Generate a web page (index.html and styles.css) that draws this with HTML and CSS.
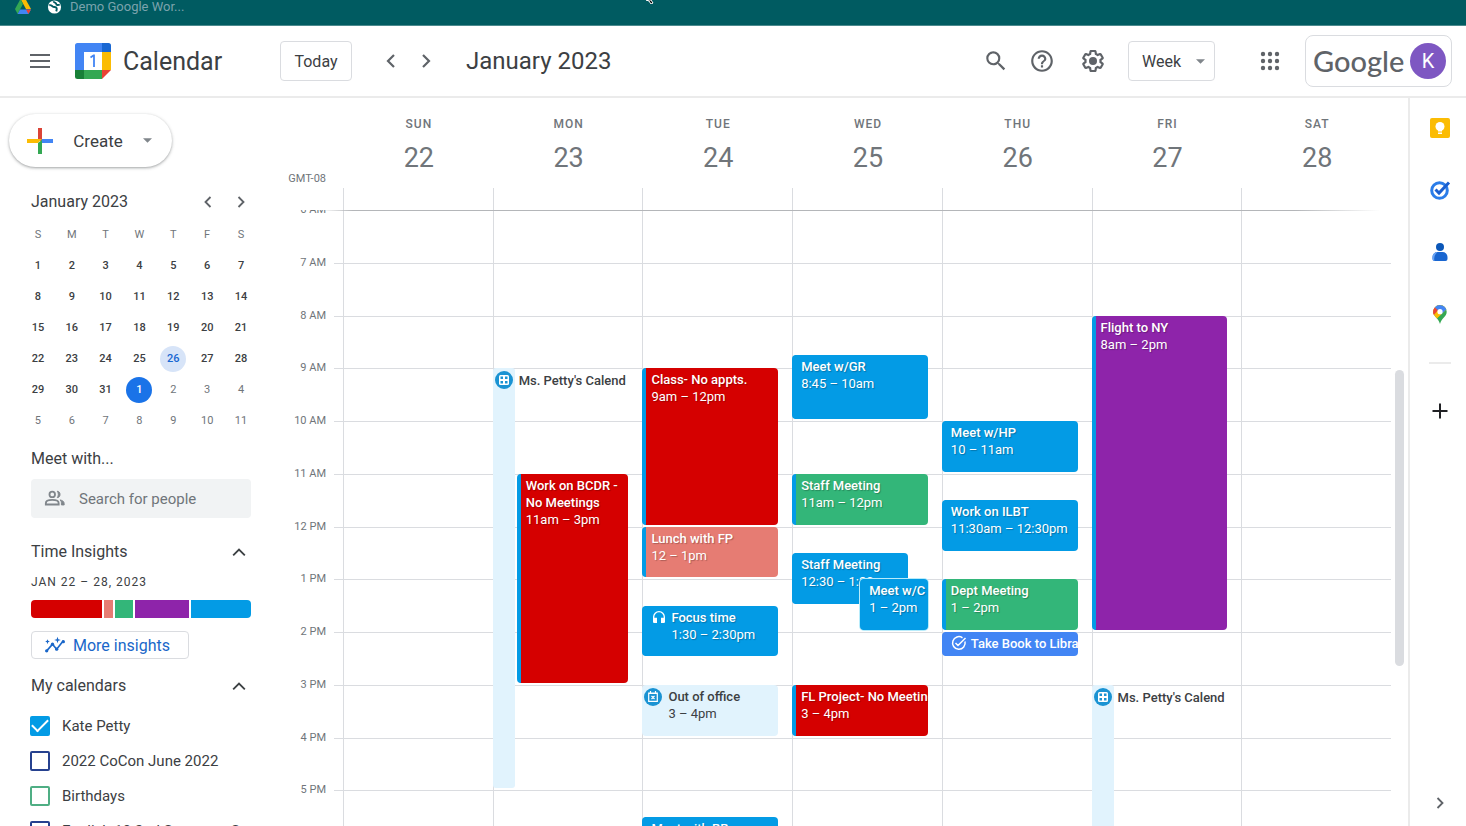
FILE: index.html
```html
<!DOCTYPE html>
<html lang="en">
<head>
<meta charset="utf-8">
<title>Calendar - January 2023</title>
<link rel="stylesheet" href="styles.css">
</head>
<body>
<svg class="defs" aria-hidden="true">
  <symbol id="left" viewBox="0 0 24 24"><path d="M15 6l-6 6 6 6" fill="none" stroke="currentColor" stroke-width="2.2"/></symbol>
  <symbol id="right" viewBox="0 0 24 24"><path d="M9 6l6 6-6 6" fill="none" stroke="currentColor" stroke-width="2.2"/></symbol>
  <symbol id="up" viewBox="0 0 24 24"><path d="M5 16l7-7 7 7" fill="none" stroke="currentColor" stroke-width="2.2"/></symbol>
  <symbol id="slots" viewBox="0 0 18 18"><circle cx="9" cy="9" r="9" fill="#1a93d3"/><rect x="4" y="4" width="10" height="10" rx="1.5" fill="#fff"/><path d="M5.500 5.500h2.500v2.500H5.500zM10 5.500h2.500v2.500H10zM5.500 10h2.500v2.500H5.500zM10 10h2.500v2.500H10z" fill="#1a93d3"/></symbol>
</svg>

<div class="bookmarks">
  <svg class="bm-drive" viewBox="0 0 16 15"><path d="M5.500-1h5L16 9h-5z" fill="#fbbc04"/><path d="M5.500-1L0 9l2.600 5L8 4z" fill="#34a853"/><path d="M2.600 14L5 9.500h11L13.400 14z" fill="#4285f4"/><path d="M11 9.500h5L13.400 14z" fill="#ea4335"/></svg>
  <svg class="bm-globe" viewBox="0 0 16 16"><circle cx="8" cy="8" r="7.500" fill="#fff"/><path d="M2 6c3-1 3 2 6 2s3 2 2 5M7 1.500c0 2 3 1 3 3s3 1 4 1" fill="none" stroke="#005b61" stroke-width="2.200"/></svg>
  <span>Demo Google Wor...</span>
  <svg class="pointer" viewBox="0 0 10 4"><path d="M1 0h5l2 3-2 1-2-3z" fill="#000" stroke="#fff"/></svg>
</div>

<header class="topbar">
  <button class="icon-btn" aria-label="Main menu"><svg class="i20" viewBox="0 0 20 14"><path d="M0 1h20M0 7h20M0 13h20" stroke="currentColor" stroke-width="2"/></svg></button>
  <div class="brand">
    <svg class="logo" viewBox="0 0 36 36"><path d="M2.500 0H27v9H9v18H0V2.500A2.500 2.500 0 0 1 2.500 0z" fill="#4285f4"/><path d="M27 0h6.500A2.500 2.500 0 0 1 36 2.500V9h-9z" fill="#1967d2"/><path d="M27 9h9v18h-9z" fill="#fbbc04"/><path d="M9 27h18v9H9z" fill="#34a853"/><path d="M0 27h9v9H2.500A2.500 2.500 0 0 1 0 33.500z" fill="#188038"/><path d="M27 27h9l-9 9z" fill="#ea4335"/><path d="M9 9h18v18H9z" fill="#fff"/><path d="M15.500 14.500l3-2h.5V24" fill="none" stroke="#4285f4" stroke-width="1.800"/></svg>
    <span class="brand-name">Calendar</span>
  </div>
  <button class="box-btn today">Today</button>
  <div class="pager">
    <button class="icon-btn" aria-label="Previous week"><svg class="i24"><use href="#left"/></svg></button>
    <button class="icon-btn" aria-label="Next week"><svg class="i24"><use href="#right"/></svg></button>
  </div>
  <h1 class="period">January 2023</h1>
  <div class="tools">
    <button class="icon-btn" aria-label="Search"><svg class="i26" viewBox="0 0 24 24"><path fill="currentColor" d="M15.500 14h-.79l-.28-.27A6.471 6.471 0 0 0 16 9.500 6.500 6.500 0 1 0 9.500 16c1.610 0 3.090-.590 4.230-1.570l.27.28v.79l5 4.990L20.490 19l-4.990-5zm-6 0C7.010 14 5 11.990 5 9.500S7.010 5 9.500 5 14 7.010 14 9.500 11.990 14 9.500 14z"/></svg></button>
    <button class="icon-btn" aria-label="Support"><svg class="i26" viewBox="0 0 24 24"><path fill="currentColor" d="M11 18h2v-2h-2v2zm1-16C6.480 2 2 6.480 2 12s4.480 10 10 10 10-4.480 10-10S17.520 2 12 2zm0 18c-4.410 0-8-3.590-8-8s3.590-8 8-8 8 3.590 8 8-3.590 8-8 8zm0-14c-2.210 0-4 1.790-4 4h2c0-1.100.9-2 2-2s2 .9 2 2c0 2-3 1.750-3 5h2c0-2.250 3-2.500 3-5 0-2.210-1.790-4-4-4z"/></svg></button>
    <button class="icon-btn" aria-label="Settings"><svg class="i26" viewBox="0 0 24 24"><path fill="currentColor" d="M13.850 22.250h-3.700c-.74 0-1.360-.54-1.450-1.270l-.27-1.890c-.27-.14-.53-.29-.79-.46l-1.800.72c-.7.26-1.470-.03-1.810-.65L2.200 15.530c-.35-.66-.2-1.440.36-1.880l1.530-1.190c-.01-.15-.02-.3-.02-.46 0-.15.01-.31.02-.46l-1.520-1.190c-.59-.45-.74-1.260-.37-1.880l1.850-3.190c.34-.62 1.110-.9 1.790-.63l1.810.73c.26-.17.52-.32.78-.46l.27-1.910c.09-.7.71-1.250 1.440-1.250h3.700c.74 0 1.360.54 1.450 1.270l.27 1.890c.27.14.53.29.79.46l1.800-.72c.71-.26 1.480.03 1.820.65l1.840 3.180c.36.66.2 1.440-.36 1.880l-1.520 1.190c.01.15.02.3.02.46s-.01.31-.02.46l1.520 1.190c.56.45.72 1.230.37 1.860l-1.860 3.220c-.34.62-1.110.9-1.800.63l-1.800-.72c-.26.17-.52.32-.78.46l-.27 1.910c-.1.68-.72 1.220-1.460 1.220zm-3.230-2h2.760l.37-2.550.53-.22c.44-.18.88-.44 1.340-.78l.45-.34 2.380.96 1.380-2.400-2.030-1.580.07-.56c.03-.26.06-.51.06-.78s-.03-.53-.06-.78l-.07-.56 2.030-1.580-1.390-2.400-2.390.96-.45-.35c-.42-.32-.87-.58-1.330-.77l-.52-.22-.37-2.550h-2.760l-.37 2.550-.53.21c-.44.19-.88.44-1.340.79l-.45.33-2.380-.95-1.390 2.390 2.030 1.580-.07.56a7 7 0 0 0-.06.79c0 .26.02.53.06.78l.07.56-2.030 1.580 1.380 2.400 2.390-.96.45.35c.43.33.86.58 1.330.77l.53.22.38 2.550z"/><circle cx="12" cy="12" r="3.700" fill="currentColor"/></svg></button>
  </div>
  <div class="view-pick"><select aria-label="View"><option>Week</option></select><svg class="caret" viewBox="0 0 10 5"><path d="M0 0h10L5 5z" fill="#80868b"/></svg></div>
  <button class="icon-btn apps" aria-label="Google apps"><svg class="i20" viewBox="0 0 20 20" fill="currentColor"><circle cx="3" cy="3" r="2.200"/><circle cx="10" cy="3" r="2.200"/><circle cx="17" cy="3" r="2.200"/><circle cx="3" cy="10" r="2.200"/><circle cx="10" cy="10" r="2.200"/><circle cx="17" cy="10" r="2.200"/><circle cx="3" cy="17" r="2.200"/><circle cx="10" cy="17" r="2.200"/><circle cx="17" cy="17" r="2.200"/></svg></button>
  <a class="account" href="#"><span class="wordmark">Google</span><span class="avatar">K</span></a>
</header>

<div class="main">
  <aside class="sidebar">
    <button class="create"><svg class="plus" viewBox="0 0 26 26"><path d="M11 0h4v13h-4z" fill="#db4437"/><path d="M0 11h11l4 0-4 4H0z" fill="#fbbc04"/><path d="M15 11h11v4H13z" fill="#4285f4"/><path d="M11 15l4-3v14h-4z" fill="#34a853"/></svg><span>Create</span><svg class="caret" viewBox="0 0 10 5"><path d="M0 0h10L5 5z" fill="#80868b"/></svg></button>

    <div class="mini-head"><h2>January 2023</h2>
      <button class="icon-btn" aria-label="Previous month"><svg class="i20"><use href="#left"/></svg></button>
      <button class="icon-btn" aria-label="Next month"><svg class="i20"><use href="#right"/></svg></button></div>
    <table class="mini">
      <thead><tr><th>S</th><th>M</th><th>T</th><th>W</th><th>T</th><th>F</th><th>S</th></tr></thead>
      <tbody>
      <tr><td>1</td><td>2</td><td>3</td><td>4</td><td>5</td><td>6</td><td>7</td></tr>
      <tr><td>8</td><td>9</td><td>10</td><td>11</td><td>12</td><td>13</td><td>14</td></tr>
      <tr><td>15</td><td>16</td><td>17</td><td>18</td><td>19</td><td>20</td><td>21</td></tr>
      <tr><td>22</td><td>23</td><td>24</td><td>25</td><td><span class="dot selected">26</span></td><td>27</td><td>28</td></tr>
      <tr><td>29</td><td>30</td><td>31</td><td><span class="dot current">1</span></td><td class="out">2</td><td class="out">3</td><td class="out">4</td></tr>
      <tr class="out"><td>5</td><td>6</td><td>7</td><td>8</td><td>9</td><td>10</td><td>11</td></tr>
      </tbody>
    </table>

    <h2 class="meet"><label for="people">Meet with...</label></h2>
    <div class="people"><svg class="i22" viewBox="0 0 24 24" fill="none" stroke="#80868b" stroke-width="2"><circle cx="9" cy="7" r="3"/><path d="M2 18v-1.500C2 14 6 13 9 13s7 1 7 3.500V18z"/><path d="M14.500 3.500c4 0 4 7 0 7 1.500-2 1.500-5 0-7z" fill="#80868b" stroke-width="1"/><path d="M17.500 13c2.500.5 4.500 1.500 4.500 4v1.500h-3V16c0-1.500-.5-2-1.500-3z" fill="#80868b" stroke-width="1"/></svg><input id="people" type="text" placeholder="Search for people"></div>

    <div class="section-head insights-head"><h2>Time Insights</h2><button class="icon-btn" aria-label="Collapse time insights"><svg class="i20"><use href="#up"/></svg></button></div>
    <p class="range">JAN 22 – 28, 2023</p>
    <div class="bar"><i class="red" style="flex-grow:71"></i><i class="salmon" style="flex-grow:9"></i><i class="green" style="flex-grow:18"></i><i class="purple" style="flex-grow:53"></i><i class="blue" style="flex-grow:60"></i></div>
    <button class="more"><svg class="i20" viewBox="0 0 24 20" fill="none" stroke="#1a67c9" stroke-width="2"><path d="M2 17l7-8 5 6 8-10"/><g fill="#1a67c9" stroke="none"><circle cx="2" cy="17" r="2"/><circle cx="9" cy="9" r="2"/><circle cx="14" cy="15" r="2"/><circle cx="22" cy="6" r="2"/><path d="M15 0l1 3 3 1-3 1-1 3-1-3-3-1 3-1zM3 3l.8 2 2 .8-2 .8L3 9l-.8-2.400-2-.8 2-.8z"/></g></svg>More insights</button>

    <div class="section-head cal-head"><h2>My calendars</h2><button class="icon-btn" aria-label="Collapse my calendars"><svg class="i20"><use href="#up"/></svg></button></div>
    <ul class="cals">
      <li><label><input type="checkbox" class="c-blue" checked>Kate Petty</label></li>
      <li><label><input type="checkbox" class="c-navy">2022 CoCon June 2022</label></li>
      <li><label><input type="checkbox" class="c-green">Birthdays</label></li>
      <li><label><input type="checkbox" class="c-navy">English 10 2nd Semester S...</label></li>
    </ul>
  </aside>

  <main class="week">
    <div class="days-head">
      <div class="zone">GMT-08</div>
      <div class="day-name"><span>SUN</span><b>22</b></div>
      <div class="day-name"><span>MON</span><b>23</b></div>
      <div class="day-name"><span>TUE</span><b>24</b></div>
      <div class="day-name"><span>WED</span><b>25</b></div>
      <div class="day-name"><span>THU</span><b>26</b></div>
      <div class="day-name"><span>FRI</span><b>27</b></div>
      <div class="day-name"><span>SAT</span><b>28</b></div>
    </div>
    <div class="scroll">
      <div class="edge"></div>
      <div class="board">
        <div class="hours"><span>6 AM</span><span>7 AM</span><span>8 AM</span><span>9 AM</span><span>10 AM</span><span>11 AM</span><span>12 PM</span><span>1 PM</span><span>2 PM</span><span>3 PM</span><span>4 PM</span><span>5 PM</span></div>
        <div class="lines"><i></i><i></i><i></i><i></i><i></i><i></i><i></i><i></i><i></i><i></i><i></i><i></i></div>
        <div class="days">
          <div class="day"></div>
          <div class="day">
            <div class="slot" style="grid-row:13/45"><div class="strip"><svg class="i18"><use href="#slots"/></svg></div><strong>Ms. Petty's Calend</strong></div>
            <div class="event red inset" style="grid-row:21/37"><strong>Work on BCDR - No Meetings</strong><span>11am – 3pm</span></div>
          </div>
          <div class="day">
            <div class="event red one" style="grid-row:13/25"><strong>Class- No appts.</strong><span>9am – 12pm</span></div>
            <div class="event salmon one" style="grid-row:25/29"><strong>Lunch with FP</strong><span>12 – 1pm</span></div>
            <div class="event blue one with-icon" style="grid-row:31/35"><svg class="i16" viewBox="0 0 24 24"><path fill="#fff" d="M12 3a9 9 0 0 0-9 9v7c0 1.100.9 2 2 2h4v-8H5v-1a7 7 0 0 1 14 0v1h-4v8h4c1.100 0 2-.9 2-2v-7a9 9 0 0 0-9-9z"/></svg><div><strong>Focus time</strong><span>1:30 – 2:30pm</span></div></div>
            <div class="event away one" style="grid-row:37/41"><svg class="i18" viewBox="0 0 18 18"><circle cx="9" cy="9" r="9" fill="#1a93d3"/><path d="M4.700 5h8.600v8.300H4.700zM4.700 5.500h8.600M6.500 3v2M11.500 3v2M7.500 8l3 3M10.500 8l-3 3" fill="none" stroke="#fff" stroke-width="1.200"/></svg><div><strong>Out of office</strong><span>3 – 4pm</span></div></div>
            <div class="event blue one" style="grid-row:47/49"><strong>Meet with RR</strong></div>
          </div>
          <div class="day">
            <div class="event blue one" style="grid-row:12/17"><strong>Meet w/GR</strong><span>8:45 – 10am</span></div>
            <div class="event green one" style="grid-row:21/25"><strong>Staff Meeting</strong><span>11am – 12pm</span></div>
            <div class="event blue one under" style="grid-row:27/31"><strong>Staff Meeting</strong><span>12:30 – 1:30pm</span></div>
            <div class="event blue one over" style="grid-row:29/33"><strong>Meet w/C</strong><span>1 – 2pm</span></div>
            <div class="event red one" style="grid-row:37/41"><strong>FL Project- No Meetings</strong><span>3 – 4pm</span></div>
          </div>
          <div class="day">
            <div class="event blue one" style="grid-row:17/21"><strong>Meet w/HP</strong><span>10 – 11am</span></div>
            <div class="event blue one" style="grid-row:23/27"><strong>Work on ILBT</strong><span>11:30am – 12:30pm</span></div>
            <div class="event green one" style="grid-row:29/33"><strong>Dept Meeting</strong><span>1 – 2pm</span></div>
            <div class="event task one with-icon" style="grid-row:33/35"><svg class="i16" viewBox="0 0 16 16" fill="none" stroke="#fff" stroke-width="1.500"><path d="M14 6.500A6.300 6.300 0 1 1 11.500 2.800M4.500 8l2.500 2.500L14.500 3"/></svg><strong>Take Book to Library</strong></div>
          </div>
          <div class="day">
            <div class="event purple one" style="grid-row:9/33"><strong>Flight to NY</strong><span>8am – 2pm</span></div>
            <div class="slot" style="grid-row:37/49"><div class="strip"><svg class="i18"><use href="#slots"/></svg></div><strong>Ms. Petty's Calend</strong></div>
          </div>
          <div class="day"></div>
        </div>
      </div>
      <div class="track"><div class="thumb"></div></div>
    </div>
  </main>

  <aside class="panel">
    <button class="icon-btn" aria-label="Keep"><svg class="i22" viewBox="0 0 22 22"><rect x="1" y="1" width="20" height="20" rx="2" fill="#fbbc04"/><circle cx="11" cy="9.500" r="4.500" fill="#fff"/><path d="M9 12h4v2.500H9zM9 15.500h4V17H9z" fill="#fff"/></svg></button>
    <button class="icon-btn" aria-label="Tasks"><svg class="i22" viewBox="0 0 22 22" fill="none"><circle cx="10.500" cy="11.500" r="7.800" stroke="#2b7de9" stroke-width="3"/><path d="M6.500 10.500l3.500 3.500L20 3.500" stroke="#1a5fd0" stroke-width="3"/></svg></button>
    <button class="icon-btn" aria-label="Contacts"><svg class="i22" viewBox="0 0 22 22"><circle cx="11" cy="6" r="4" fill="#0b57b8"/><path d="M3.500 16a5 5 0 0 1 5-5h5a5 5 0 0 1 5 5v2a2 2 0 0 1-2 2h-11a2 2 0 0 1-2-2z" fill="#1a66d0"/><path d="M3.500 16a5 5 0 0 1 5-5 9 9 0 0 0-3 9 2 2 0 0 1-2-2z" fill="#6aa4f5"/></svg></button>
    <button class="icon-btn" aria-label="Maps"><svg class="i22" viewBox="0 0 22 22"><path d="M11 2a6.700 6.700 0 0 1 6.700 6.700c0 5-5.200 6.300-6.700 12.300-1.500-6-6.700-7.300-6.700-12.300A6.700 6.700 0 0 1 11 2z" fill="#34a853"/><path d="M5.800 4.500A6.700 6.700 0 0 1 17.300 6.500L8 15.500C6 13.500 4.300 11.500 4.300 8.700c0-1.600.5-3 1.500-4.200z" fill="#fbbc04"/><path d="M5.800 4.500A6.700 6.700 0 0 1 17.300 6.500L12 11.500z" fill="#4285f4"/><path d="M5.800 4.500L9 7.200 4.800 12a7 7 0 0 1 1-7.500z" fill="#ea4335"/><circle cx="11" cy="8.700" r="2.600" fill="#fff"/></svg></button>
    <hr>
    <button class="icon-btn add" aria-label="Get add-ons"><svg class="i22" viewBox="0 0 22 22"><path d="M11 3.500v15M3.500 11h15" stroke="#202124" stroke-width="2"/></svg></button>
    <button class="icon-btn hide" aria-label="Hide side panel"><svg class="i20"><use href="#right"/></svg></button>
  </aside>
</div>
</body>
</html>
```
FILE: styles.css
```css
* { box-sizing: border-box; }
body {
  margin: 0;
  height: 100vh;
  display: flex;
  flex-direction: column;
  overflow: hidden;
  background: #fff;
  color: #3c4043;
  font-family: Roboto, "Liberation Sans", sans-serif;
  font-size: 13px;
}
h1, h2, p, ul { margin: 0; padding: 0; }
ul { list-style: none; }
button, input, select { font: inherit; color: inherit; }
svg { display: block; flex: none; }
.defs { position: absolute; width: 0; height: 0; }
.i16 { width: 16px; height: 16px; }
.i18 { width: 18px; height: 18px; }
.i20 { width: 20px; height: 20px; }
.i22 { width: 22px; height: 22px; }
.i24 { width: 24px; height: 24px; }
.i26 { width: 26px; height: 26px; }
.icon-btn { border: 0; padding: 0; background: none; color: #5f6368; display: flex; }
.caret { width: 9px; height: 5px; }

/* Browser bookmarks strip */
.bookmarks {
  flex: none;
  height: 26px;
  background: #005b61;
  border-bottom: 1px solid #4b8a8e;
  color: #7ba3ad;
  display: flex;
  align-items: flex-start;
  padding-left: 15px;
  line-height: 14px;
  position: relative;
}
.bm-drive { width: 16px; height: 15px; margin-right: 16px; }
.bm-globe { width: 15px; height: 14px; margin-right: 8px; }
.pointer { position: absolute; left: 44%; top: 0; width: 10px; height: 4px; }

/* Top bar */
.topbar {
  flex: none;
  height: 72px;
  border-bottom: 2px solid #ebebeb;
  display: flex;
  align-items: center;
  padding: 0 14px 0 30px;
}
.brand { display: flex; align-items: center; gap: 12px; width: 205px; margin-left: 25px; }
.logo { width: 36px; height: 36px; }
.brand-name { font-size: 25px; }
.box-btn { background: #fff; border: 1px solid #dadce0; border-radius: 4px; }
.today { width: 72px; height: 40px; padding: 0; font-size: 16px; color: #3c4043; }
.pager { display: flex; gap: 11px; margin-left: 27px; }
.period { font-size: 24px; font-weight: 400; margin-left: 28px; }
.tools { display: flex; gap: 25px; margin-left: auto; }
.tools button:first-child { margin-right: -5px; }
.view-pick { display: flex; align-items: center; position: relative; margin-left: 22px; }
.view-pick select {
  appearance: none;
  width: 87px;
  height: 40px;
  padding: 0 0 0 13px;
  background: #fff;
  border: 1px solid #dadce0;
  border-radius: 4px;
  font-size: 16px;
}
.view-pick .caret { position: absolute; right: 10px; pointer-events: none; }
.apps { margin: 0 25px 0 45px; }
.account {
  display: flex;
  align-items: center;
  justify-content: space-between;
  width: 147px;
  height: 52px;
  padding: 0 5px 0 7px;
  border: 1px solid #dadce0;
  border-radius: 8px;
  text-decoration: none;
  color: #5f6368;
}
.wordmark { font-family: Lato, Roboto, sans-serif; font-size: 29px; font-weight: 500; line-height: 36px; }
.avatar {
  width: 36px;
  height: 36px;
  border-radius: 50%;
  background: #7e57c2;
  color: #fff;
  font-size: 20px;
  line-height: 36px;
  text-align: center;
}

.main { flex: 1; min-height: 0; display: flex; }

/* Sidebar */
.sidebar { flex: none; width: 271px; padding: 16px 14px 0 9px; overflow: hidden; }
.sidebar h2 { font-size: 16px; font-weight: 400; line-height: 20px; }
.create {
  display: flex;
  align-items: center;
  width: 163px;
  height: 53px;
  padding: 0 20px 0 18px;
  border: 0;
  border-radius: 27px;
  background: #fff;
  box-shadow: 0 1px 2px rgba(60, 64, 67, .3), 0 1px 3px 1px rgba(60, 64, 67, .15);
  font-size: 17px;
}
.create span { margin: 0 auto; }
.plus { width: 26px; height: 26px; }
.mini-head { display: flex; align-items: center; height: 20px; margin: 25px 6px 7px 22px; gap: 13px; }
.mini-head h2 { margin-right: auto; }
.mini { width: 237px; margin-left: 12px; border-collapse: collapse; table-layout: fixed; font-size: 11px; }
.mini th, .mini td { height: 31px; padding: 0; text-align: center; font-weight: 500; }
.mini th { color: #70757a; font-weight: 400; }
.mini .out, .mini .out td { color: #70757a; font-weight: 400; }
.dot { display: block; width: 26px; height: 26px; margin: 0 auto; border-radius: 50%; line-height: 26px; }
.selected { background: #d7e4f8; color: #1967d2; }
.current { background: #1a73e8; color: #fff; }
.sidebar .meet { margin: 13px 0 10px 22px; }
.people {
  display: flex;
  align-items: center;
  gap: 13px;
  height: 39px;
  margin: 0 6px 0 22px;
  padding-left: 13px;
  background: #f1f3f4;
  border-radius: 4px;
}
.people input { flex: 1; min-width: 0; border: 0; padding: 0; background: none; font-size: 15px; }
.people input::placeholder { color: #70757a; opacity: 1; }
.section-head { display: flex; align-items: center; justify-content: space-between; margin: 0 8px 0 22px; color: #3c4043; }
.section-head .icon-btn { color: #3c4043; }
.insights-head { margin-top: 24px; }
.range { margin: 12px 0 10px 22px; font-size: 12px; line-height: 16px; letter-spacing: 1px; }
.bar { display: flex; gap: 2px; height: 18px; margin: 0 6px 0 22px; border-radius: 4px; overflow: hidden; }
.bar i { flex-basis: 0; }
.more {
  display: flex;
  align-items: center;
  gap: 8px;
  width: 158px;
  height: 28px;
  margin: 13px 0 0 22px;
  padding: 0 0 0 13px;
  border: 1px solid #dadce0;
  border-radius: 4px;
  background: #fff;
  color: #1a67c9;
  font-size: 16px;
}
.cal-head { margin-top: 17px; }
.cals { margin: 12px 0 0 21px; }
.cals label { display: flex; align-items: center; gap: 12px; height: 35px; font-size: 15px; white-space: nowrap; }
.cals input {
  appearance: none;
  flex: none;
  width: 20px;
  height: 20px;
  margin: 0;
  border: 2px solid;
  border-radius: 2px;
  display: grid;
  place-items: center;
}
.cals .c-blue { border-color: #039be5; background: #039be5; }
.cals .c-navy { border-color: #26418f; }
.cals .c-green { border-color: #4fae84; }
.cals input:checked::after {
  content: "";
  width: 14px;
  height: 7px;
  border: solid #fff;
  border-width: 0 0 2px 2px;
  transform: translateY(-2px) rotate(-45deg);
}

/* Event colours */
.red { background: #d50000; }
.salmon { background: #e67c73; }
.green { background: #33b679; }
.purple { background: #8e24aa; }
.blue { background: #039be5; }
.task { background: #4285f4; }

/* Week view */
.week { flex: 1; min-width: 0; display: flex; flex-direction: column; }
.days-head {
  flex: none;
  display: grid;
  grid-template-columns: 72px repeat(7, 1fr);
  height: 112px;
  margin-right: 17px;
  color: #70757a;
}
.zone { padding: 74px 17px 0 0; text-align: right; font-size: 11px; line-height: 14px; }
.day-name {
  display: flex;
  flex-direction: column;
  align-items: center;
  padding: 18px 0 0 2px;
  background: linear-gradient(#dadce0, #dadce0) left bottom / 1px 22px no-repeat;
}
.day-name span { font-size: 12px; font-weight: 500; line-height: 16px; letter-spacing: 1px; }
.day-name b { margin-top: 10px; font-size: 27px; font-weight: 400; line-height: 32px; }
.scroll { flex: 1; min-height: 0; overflow: hidden; position: relative; display: flex; align-items: flex-start; }
.edge {
  position: absolute;
  left: 50px;
  right: 28px;
  top: 0;
  height: 1px;
  background: linear-gradient(90deg, transparent, #b4b6b9 3%, #b4b6b9 92%, transparent);
  z-index: 2;
}
.board { flex: 1; min-width: 0; display: grid; grid-template-columns: 63px 9px 1fr; grid-template-rows: 633px; }
.hours, .lines { display: grid; grid-template-rows: repeat(12, 1fr); }
.hours { grid-area: 1 / 1; padding-right: 8px; text-align: right; color: #70757a; font-size: 11px; line-height: 14px; }
.hours span { margin-top: -7px; }
.lines { grid-area: 1 / 2 / 2 / 4; }
.lines i { border-top: 1px solid #dadce0; }
.lines i:first-child { border-color: transparent; }
.days { grid-area: 1 / 3; display: grid; grid-template-columns: repeat(7, 1fr); }
.day {
  min-width: 0;
  display: grid;
  grid-template-columns: minmax(0, 1fr);
  grid-template-rows: repeat(48, minmax(0, 1fr));
  padding-right: 14px;
  box-shadow: inset 1px 0 #dadce0;
}
.event, .slot { grid-column: 1; overflow: hidden; line-height: 17px; }
.event {
  margin: 0 0 2px;
  padding: 3px 0 0 5px;
  border-left: 4px solid #039be5;
  border-radius: 4px;
  color: #fff;
}
.event strong, .slot strong { display: block; font-weight: 500; }
.event span { display: block; }
.event.red, .event.salmon, .event.green, .event.blue, .event.purple { text-shadow: 1px 1px 1px rgba(0, 0, 0, .25); }
.one, .slot { white-space: nowrap; }
.event.inset { margin-left: 24px; }
.event.under { margin-right: 20px; }
.event.over { margin-left: 68px; box-shadow: 0 0 0 1px #b8ecfb; z-index: 1; }
.with-icon { display: flex; gap: 4px; }
.event.task { border-left-color: #4285f4; }
.event.away { display: flex; gap: 6px; border: 0; padding-left: 2px; background: #e1f3fd; color: #3c4043; }
.slot { display: flex; gap: 4px; margin-bottom: 2px; }
.slot strong { padding-top: 4px; }
.strip { flex: none; width: 22px; padding: 3px 0 0 2px; background: #e1f3fd; border-radius: 3px; }
.track { flex: none; align-self: stretch; width: 17px; display: grid; grid-template-rows: 26% 48% 1fr; padding: 0 4px; }
.thumb { grid-row: 2; background: #dadce0; border-radius: 5px; }

/* Side panel */
.panel {
  flex: none;
  width: 58px;
  padding: 19px 0 13px 3px;
  border-left: 2px solid #ebebeb;
  display: flex;
  flex-direction: column;
  align-items: center;
  gap: 40px;
}
.panel hr { width: 22px; height: 2px; margin: -3px 0 -4px; border: 0; background: #ebebeb; }
.hide { margin-top: auto; }
```
